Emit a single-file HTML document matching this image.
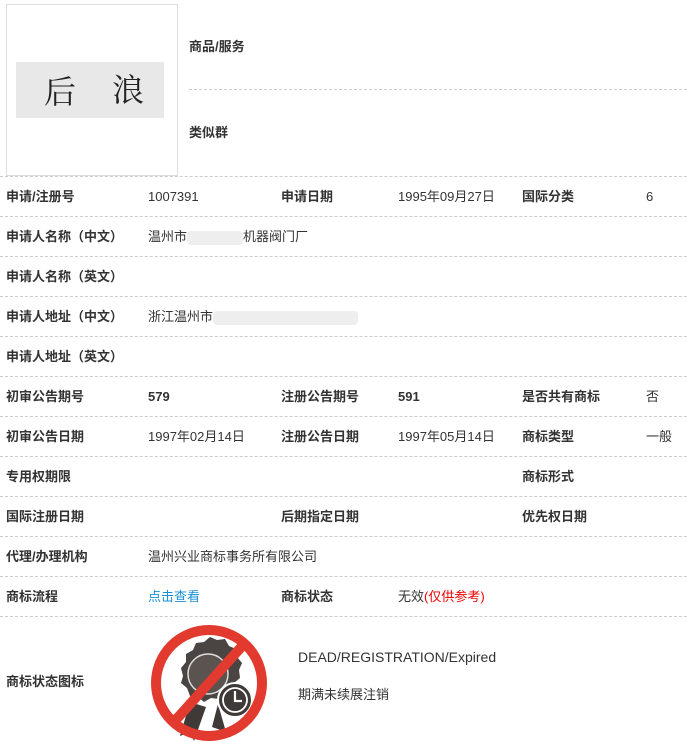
<!DOCTYPE html>
<html><head><meta charset="utf-8"><style>
body{margin:0;width:687px;height:745px;background:#fff;position:relative;overflow:hidden;font-family:"Liberation Sans","Noto Sans CJK SC",sans-serif;font-size:13px;color:#333}
.t{position:absolute;white-space:nowrap;line-height:16px}
.b{font-weight:bold}
.l{position:absolute;left:0;width:687px;border-top:1px dashed #ccc;height:0}
</style></head><body>
<div style="position:absolute;left:6px;top:4px;width:170px;height:170px;border:1px solid #ddd"></div>
<div style="position:absolute;left:16px;top:62px;width:148px;height:56px;background:#e8e8e8"></div>
<div class="t" style="left:44px;top:72px;font-size:32px;line-height:36px;font-family:'Noto Serif CJK SC',serif;color:#222">后</div>
<div class="t" style="left:112px;top:70px;font-size:32px;line-height:36px;font-family:'Noto Serif CJK SC',serif;color:#222">浪</div>
<div class="t b" style="left:189px;top:39px">商品/服务</div>
<div style="position:absolute;left:189px;top:89px;width:498px;border-top:1px dashed #ccc"></div>
<div class="t b" style="left:189px;top:125px">类似群</div>
<div class="l" style="top:176px"></div>
<div class="l" style="top:216px"></div>
<div class="l" style="top:256px"></div>
<div class="l" style="top:296px"></div>
<div class="l" style="top:336px"></div>
<div class="l" style="top:376px"></div>
<div class="l" style="top:416px"></div>
<div class="l" style="top:456px"></div>
<div class="l" style="top:496px"></div>
<div class="l" style="top:536px"></div>
<div class="l" style="top:576px"></div>
<div class="l" style="top:616px"></div>

<div class="t b" style="left:6px;top:189px">申请/注册号</div>
<div class="t" style="left:148px;top:189px">1007391</div>
<div class="t b" style="left:281px;top:189px">申请日期</div>
<div class="t" style="left:398px;top:189px">1995年09月27日</div>
<div class="t b" style="left:522px;top:189px">国际分类</div>
<div class="t" style="left:646px;top:189px">6</div>

<div class="t b" style="left:6px;top:229px">申请人名称（中文）</div>
<div class="t" style="left:148px;top:229px">温州市<span style="display:inline-block;width:56px;height:14px;background:#eee;vertical-align:middle;border-radius:4px"></span>机器阀门厂</div>
<div class="t b" style="left:6px;top:269px">申请人名称（英文）</div>
<div class="t b" style="left:6px;top:309px">申请人地址（中文）</div>
<div class="t" style="left:148px;top:309px">浙江温州市<span style="display:inline-block;width:145px;height:14px;background:#eee;vertical-align:middle;border-radius:4px"></span></div>
<div class="t b" style="left:6px;top:349px">申请人地址（英文）</div>

<div class="t b" style="left:6px;top:389px">初审公告期号</div>
<div class="t b" style="left:148px;top:389px">579</div>
<div class="t b" style="left:281px;top:389px">注册公告期号</div>
<div class="t b" style="left:398px;top:389px">591</div>
<div class="t b" style="left:522px;top:389px">是否共有商标</div>
<div class="t" style="left:646px;top:389px">否</div>

<div class="t b" style="left:6px;top:429px">初审公告日期</div>
<div class="t" style="left:148px;top:429px">1997年02月14日</div>
<div class="t b" style="left:281px;top:429px">注册公告日期</div>
<div class="t" style="left:398px;top:429px">1997年05月14日</div>
<div class="t b" style="left:522px;top:429px">商标类型</div>
<div class="t" style="left:646px;top:429px">一般</div>

<div class="t b" style="left:6px;top:469px">专用权期限</div>
<div class="t b" style="left:522px;top:469px">商标形式</div>
<div class="t b" style="left:6px;top:509px">国际注册日期</div>
<div class="t b" style="left:281px;top:509px">后期指定日期</div>
<div class="t b" style="left:522px;top:509px">优先权日期</div>
<div class="t b" style="left:6px;top:549px">代理/办理机构</div>
<div class="t" style="left:148px;top:549px">温州兴业商标事务所有限公司</div>
<div class="t b" style="left:6px;top:589px">商标流程</div>
<div class="t" style="left:148px;top:589px;color:#1a8fd6">点击查看</div>
<div class="t b" style="left:281px;top:589px">商标状态</div>
<div class="t" style="left:398px;top:589px">无效<span style="color:#e00">(仅供参考)</span></div>

<div class="t b" style="left:6px;top:674px">商标状态图标</div>
<svg style="position:absolute;left:148px;top:622px" width="122" height="122" viewBox="0 0 122 122">
<path d="M35 54 l-2 -8 l5 -6 l0 -8 l7 -4 l3 -7 l8 -1 l6 -5 l7 3 l8 -1 l4 7 l7 3 l1 8 l5 6 l-3 7 l1 8 l-6 5 l-2 8 l-8 2 l-5 6 l-8 -1 l-7 4 l-6 -5 l-8 -1 l-3 -8 l-6 -5 z" fill="#4a4542"/>
<circle cx="60" cy="52" r="20" fill="#5a5350" stroke="#ddd" stroke-width="1.5"/>
<path d="M42 80 l-10 34 l10 -4 l4 9 l12 -34 z M70 82 l8 28 l-14 -5 z" fill="#3f3a37"/>
<circle cx="87" cy="78" r="17" fill="#3f3a37" stroke="#fff" stroke-width="2"/>
<circle cx="87" cy="78" r="12" fill="none" stroke="#fff" stroke-width="1.8"/>
<path d="M87 69 v10 h7" stroke="#fff" stroke-width="2.2" fill="none"/>
<circle cx="61" cy="61" r="53" fill="none" stroke="#e23a2e" stroke-width="10"/>
<line x1="96" y1="22" x2="25" y2="101" stroke="#e23a2e" stroke-width="10"/>
</svg>
<div class="t" style="left:298px;top:648px;font-size:14px;line-height:18px">DEAD/REGISTRATION/Expired</div>
<div class="t" style="left:298px;top:687px">期满未续展注销</div>
</body></html>
